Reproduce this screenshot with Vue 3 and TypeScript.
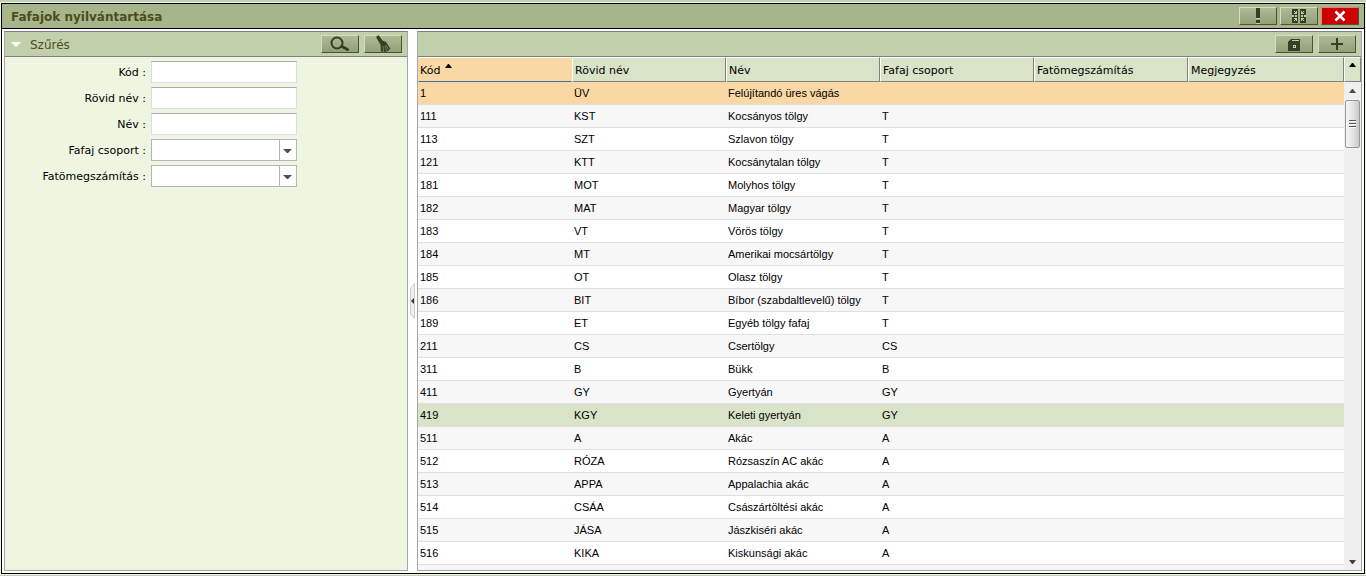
<script setup lang="ts">
import { ref } from 'vue'

interface Species {
  code: string
  short: string
  name: string
  group: string
}

const raw: [string, string, string, string][] = [
  ['1', 'ÜV', 'Felújítandó üres vágás', ''],
  ['111', 'KST', 'Kocsányos tölgy', 'T'],
  ['113', 'SZT', 'Szlavon tölgy', 'T'],
  ['121', 'KTT', 'Kocsánytalan tölgy', 'T'],
  ['181', 'MOT', 'Molyhos tölgy', 'T'],
  ['182', 'MAT', 'Magyar tölgy', 'T'],
  ['183', 'VT', 'Vörös tölgy', 'T'],
  ['184', 'MT', 'Amerikai mocsártölgy', 'T'],
  ['185', 'OT', 'Olasz tölgy', 'T'],
  ['186', 'BIT', 'Bíbor (szabdaltlevelű) tölgy', 'T'],
  ['189', 'ET', 'Egyéb tölgy fafaj', 'T'],
  ['211', 'CS', 'Csertölgy', 'CS'],
  ['311', 'B', 'Bükk', 'B'],
  ['411', 'GY', 'Gyertyán', 'GY'],
  ['419', 'KGY', 'Keleti gyertyán', 'GY'],
  ['511', 'A', 'Akác', 'A'],
  ['512', 'RÓZA', 'Rózsaszín AC akác', 'A'],
  ['513', 'APPA', 'Appalachia akác', 'A'],
  ['514', 'CSÁA', 'Császártöltési akác', 'A'],
  ['515', 'JÁSA', 'Jászkiséri akác', 'A'],
  ['516', 'KIKA', 'Kiskunsági akác', 'A'],
]
const rows: Species[] = raw.map(([code, short, name, group]) => ({ code, short, name, group }))
const columns = ['Kód', 'Rövid név', 'Név', 'Fafaj csoport', 'Fatömegszámítás', 'Megjegyzés']

const selected = ref('1')
const marked = '419'

const textFields = [
  { id: 'kod', label: 'Kód' },
  { id: 'rovid', label: 'Rövid név' },
  { id: 'nev', label: 'Név' },
]
const selectFields = [
  { id: 'csoport', label: 'Fafaj csoport' },
  { id: 'tomeg', label: 'Fatömegszámítás' },
]
</script>

<template>
  <main class="window">
    <header class="titlebar">
      <h1>Fafajok nyilvántartása</h1>
      <button class="btn" type="button" aria-label="Figyelmeztetés">
        <svg width="14" height="16" viewBox="0 0 14 16"><path d="M5 0h4v10H5zM5 12h4v3H5z" fill="#353f26" /><path d="M5 10h4v1H5zM5 15h4v1H5z" fill="#c3cdab" /></svg>
      </button>
      <button class="btn" type="button" aria-label="Teljes méret">
        <svg width="14" height="14" viewBox="0 0 14 14" shape-rendering="crispEdges">
          <path d="M0 0h14v14H0z" fill="#353f26" />
          <path d="M6 0h2v14H6z" fill="#a2ae87" />
          <path d="M0 6h5v2H0zM9 6h5v2H9zM2 2h1v1H2zM3 3h1v1H3zM4 2h1v3H2V4h2zM11 2h1v1h-1zM10 3h1v1h-1zM9 2h1v2h2v1H9zM2 11h1v1H2zM3 10h1v1H3zM2 9h3v3H4v-2H2zM11 11h1v1h-1zM10 10h1v1h-1zM9 9h3v1h-2v2H9z" fill="#c3cdab" />
          <path d="M2 6h1v2H2zM11 6h1v2h-1z" fill="#353f26" />
        </svg>
      </button>
      <button class="btn close" type="button" aria-label="Bezárás">
        <svg width="12" height="12" viewBox="0 0 12 12"><path d="M1.500 1.500l9 9M10.500 1.500l-9 9" stroke="#fff" stroke-width="2.600" /></svg>
      </button>
    </header>

    <div class="body">
      <section class="panel filter">
        <div class="bar">
          <svg class="fold" width="10" height="5" viewBox="0 0 10 5"><path d="M0 0h10L5 5z" fill="#fff" /></svg>
          <h2>Szűrés</h2>
          <button class="btn" type="button" aria-label="Keresés">
            <svg width="20" height="16" viewBox="0 0 20 16">
              <circle cx="7" cy="7" r="5.500" fill="none" stroke="#353f26" stroke-width="2" />
              <path d="M12 10.500l5.500 3" stroke="#353f26" stroke-width="3" stroke-linecap="round" />
            </svg>
          </button>
          <button class="btn" type="button" aria-label="Szűrő törlése">
            <svg width="18" height="18" viewBox="0 0 18 18">
              <path d="M2 2l2.500-2 4 5.500L12 7l4.500 7-1.500.5-.5 1.500-1.500-.3-.5 1.500-1.500-.7-1.500.8-1-.8-1.500.3-.5-7z" fill="#353f26" />
              <path d="M9 11l.5 6M11 11l1.500 5M12 10l2.500 4.500" stroke="#a2ae87" stroke-width=".6" />
            </svg>
          </button>
        </div>
        <form class="form" @submit.prevent>
          <template v-for="f in textFields" :key="f.id">
            <label :for="f.id">{{ f.label }} :</label>
            <input :id="f.id" type="text" />
          </template>
          <template v-for="f in selectFields" :key="f.id">
            <label :for="f.id">{{ f.label }} :</label>
            <span class="combo">
              <select :id="f.id"><option></option></select>
              <svg width="17" height="20" viewBox="0 0 17 20" aria-hidden="true"><path d="M0 0h1v20H0z" fill="#b5b5b5" /><path d="M4 9h9l-4 4H8z" fill="#505050" /></svg>
            </span>
          </template>
        </form>
      </section>

      <div class="splitter">
        <button type="button" aria-label="Panel összecsukása">
          <svg width="5" height="36" viewBox="0 0 5 36"><path d="M4.500.5L.5 5v26l4 4.500z" fill="#eee" stroke="#d0d0d0" /><path d="M4 15v6l-3-3z" fill="#333" /></svg>
        </button>
      </div>

      <section class="panel list">
        <div class="bar">
          <button class="btn first" type="button" aria-label="Mentés">
            <svg width="12" height="13" viewBox="0 0 12 13">
              <path d="M0 4l3-3h9v12H0z" fill="#353f26" />
              <path d="M4 2h7v1H4z" fill="#c3cdab" />
              <path d="M5 7h3v3H5z" fill="#c3cdab" />
              <path d="M6 8h1v1H6z" fill="#353f26" />
            </svg>
          </button>
          <button class="btn" type="button" aria-label="Hozzáadás">
            <svg width="12" height="12" viewBox="0 0 12 12"><path d="M5 0h2v5h5v2H7v5H5V7H0V5h5z" fill="#353f26" /></svg>
          </button>
        </div>
        <div class="grid">
          <div class="viewport">
            <table>
              <colgroup>
                <col v-for="n in 5" :key="n" class="col" />
                <col />
              </colgroup>
              <thead>
                <tr>
                  <th v-for="(c, i) in columns" :key="c" scope="col" :class="{ sorted: i === 0 }">
                    {{ c }}<svg v-if="i === 0" width="7" height="4" viewBox="0 0 7 4"><path d="M0 4h7L4 0H3z" fill="#000" /></svg>
                  </th>
                </tr>
              </thead>
              <tbody>
                <tr v-for="r in rows" :key="r.code" :class="{ selected: r.code === selected, marked: r.code === marked }" @click="selected = r.code">
                  <td>{{ r.code }}</td>
                  <td>{{ r.short }}</td>
                  <td>{{ r.name }}</td>
                  <td>{{ r.group }}</td>
                  <td></td>
                  <td></td>
                </tr>
              </tbody>
            </table>
          </div>
          <div class="side">
            <button class="corner" type="button" aria-label="Oszlopok">
              <svg width="7" height="4" viewBox="0 0 7 4"><path d="M0 4h7L4 0H3z" fill="#000" /></svg>
            </button>
            <div class="track">
              <svg width="7" height="4" viewBox="0 0 7 4"><path d="M0 4h7L4 0H3z" fill="#505050" /></svg>
              <div class="thumb"><i></i><i></i><i></i></div>
              <svg class="down" width="7" height="4" viewBox="0 0 7 4"><path d="M0 0h7L4 4H3z" fill="#404040" /></svg>
            </div>
          </div>
        </div>
      </section>
    </div>
  </main>
</template>

<style>
body {
  background: #eef6e1;
}
#app {
  padding-bottom: 1px;
  border-top: 2px solid #c1cfb5;
  border-bottom: 1px solid #c1cfb5;
}
</style>

<style scoped>
* {
  box-sizing: border-box;
}
.window {
  display: flex;
  flex-direction: column;
  height: calc(100vh - 5px);
  margin: 1px 1px 0;
  border: 1px solid #000;
  background: #fff;
  font: 11px/14px "DejaVu Sans", sans-serif;
  color: #000;
}
.titlebar {
  display: flex;
  align-items: center;
  flex: none;
  height: 25px;
  padding: 0 5px 0 9px;
  gap: 3px;
  border-bottom: 1px solid #000;
  background: #a7b58d;
}
h1,
h2 {
  margin: 0;
  padding-top: 2px;
  flex: 1;
  font-size: 12px;
  line-height: 14px;
  color: #4d4d1a;
}
h2 {
  font-weight: normal;
}
.btn {
  display: flex;
  align-items: center;
  justify-content: center;
  flex: none;
  width: 38px;
  height: 18px;
  padding: 0;
  border: 1px solid;
  border-color: #d3ddc2 #4a5239 #4a5239 #d3ddc2;
  background: linear-gradient(#adba94, #93a077);
}
.btn.close {
  border-color: #e08080 #4a5239 #4a5239 #e08080;
  background: #cc0000;
}
.body {
  display: flex;
  flex: 1;
  min-height: 0;
  padding: 2px;
}
.panel {
  display: flex;
  flex-direction: column;
  border: 1px solid #a5a5ad;
  border-top-color: #7d7d82;
}
.filter {
  flex: none;
  width: 404px;
  background: #eef6e1;
}
.list {
  flex: 1;
  min-width: 0;
}
.bar {
  display: flex;
  align-items: center;
  flex: none;
  height: 25px;
  padding: 0 5px 0 6px;
  gap: 5px;
  border-bottom: 1px solid #808080;
  background: #c1cfab;
}
.bar h2 {
  margin-left: 4px;
}
.first {
  margin-left: auto;
}
.form {
  display: grid;
  grid-template-columns: 141px 146px;
  gap: 4px 5px;
  padding-top: 4px;
}
label {
  line-height: 22px;
  padding-top: 1px;
  height: 22px;
  text-align: right;
}
input,
select {
  display: block;
  width: 100%;
  height: 22px;
  padding: 0 4px;
  border: 1px solid #dcdce4;
  border-top-color: #a8a8a8;
  border-radius: 0;
  background: #fff;
  font: inherit;
}
select {
  appearance: none;
  border-color: #b5b5b5;
}
.combo {
  display: block;
  position: relative;
}
.combo svg {
  position: absolute;
  right: 1px;
  top: 1px;
  pointer-events: none;
}
.splitter {
  display: flex;
  align-items: center;
  justify-content: center;
  flex: none;
  width: 9px;
}
.splitter button {
  padding: 0;
  border: 0;
  background: none;
  line-height: 0;
}
.grid {
  display: flex;
  flex: 1;
  min-height: 0;
}
.viewport {
  flex: 1;
  min-width: 0;
  overflow: hidden;
  background: #f7f7f7;
}
table {
  width: 100%;
  table-layout: fixed;
  border-collapse: separate;
  border-spacing: 0;
}
.col {
  width: 154px;
}
th {
  height: 25px;
  padding: 2px 2px 0;
  border: 1px solid #fff;
  border-right-color: #808080;
  border-bottom-color: #808080;
  background: #d8e3c8;
  font-weight: normal;
  text-align: left;
}
.sorted {
  padding-left: 1px;
  border-color: #fff #fad8a5 #4a6ea0 #fad8a5;
  background: #fad8a5;
}
.sorted svg {
  margin-left: 5px;
  vertical-align: 6px;
}
td {
  height: 23px;
  padding: 0 2px;
  border-bottom: 1px solid #e0e0e0;
  background: #fff;
  font: 11px/14px "Liberation Sans", Arial, sans-serif;
  white-space: nowrap;
}
tbody tr:nth-child(even) td {
  background: #f7f7f7;
}
tbody tr.selected td {
  background: #fad8a5;
}
tbody tr.marked td {
  background: #d8e3c8;
}
.side {
  display: flex;
  flex-direction: column;
  flex: none;
  width: 17px;
}
.corner {
  height: 25px;
  flex: none;
  padding: 0 0 10px;
  border: 1px solid #fff;
  border-right-color: #808080;
  border-bottom-color: #808080;
  background: #d8e3c8;
  line-height: 0;
}
.track {
  display: flex;
  flex-direction: column;
  align-items: center;
  flex: 1;
  padding: 7px 1px 6px;
  background: #f0f0f0;
}
.thumb {
  display: flex;
  flex-direction: column;
  align-items: center;
  justify-content: center;
  gap: 1px;
  width: 15px;
  height: 48px;
  margin-top: 7px;
  border: 1px solid #989898;
  border-radius: 2px;
  background: linear-gradient(90deg, #f6f6f6, #e4e4e4 50%, #c8c8cc);
}
.thumb i {
  width: 7px;
  height: 2px;
  border-top: 1px solid #555;
  background: #fff;
}
.down {
  margin-top: auto;
}
</style>
